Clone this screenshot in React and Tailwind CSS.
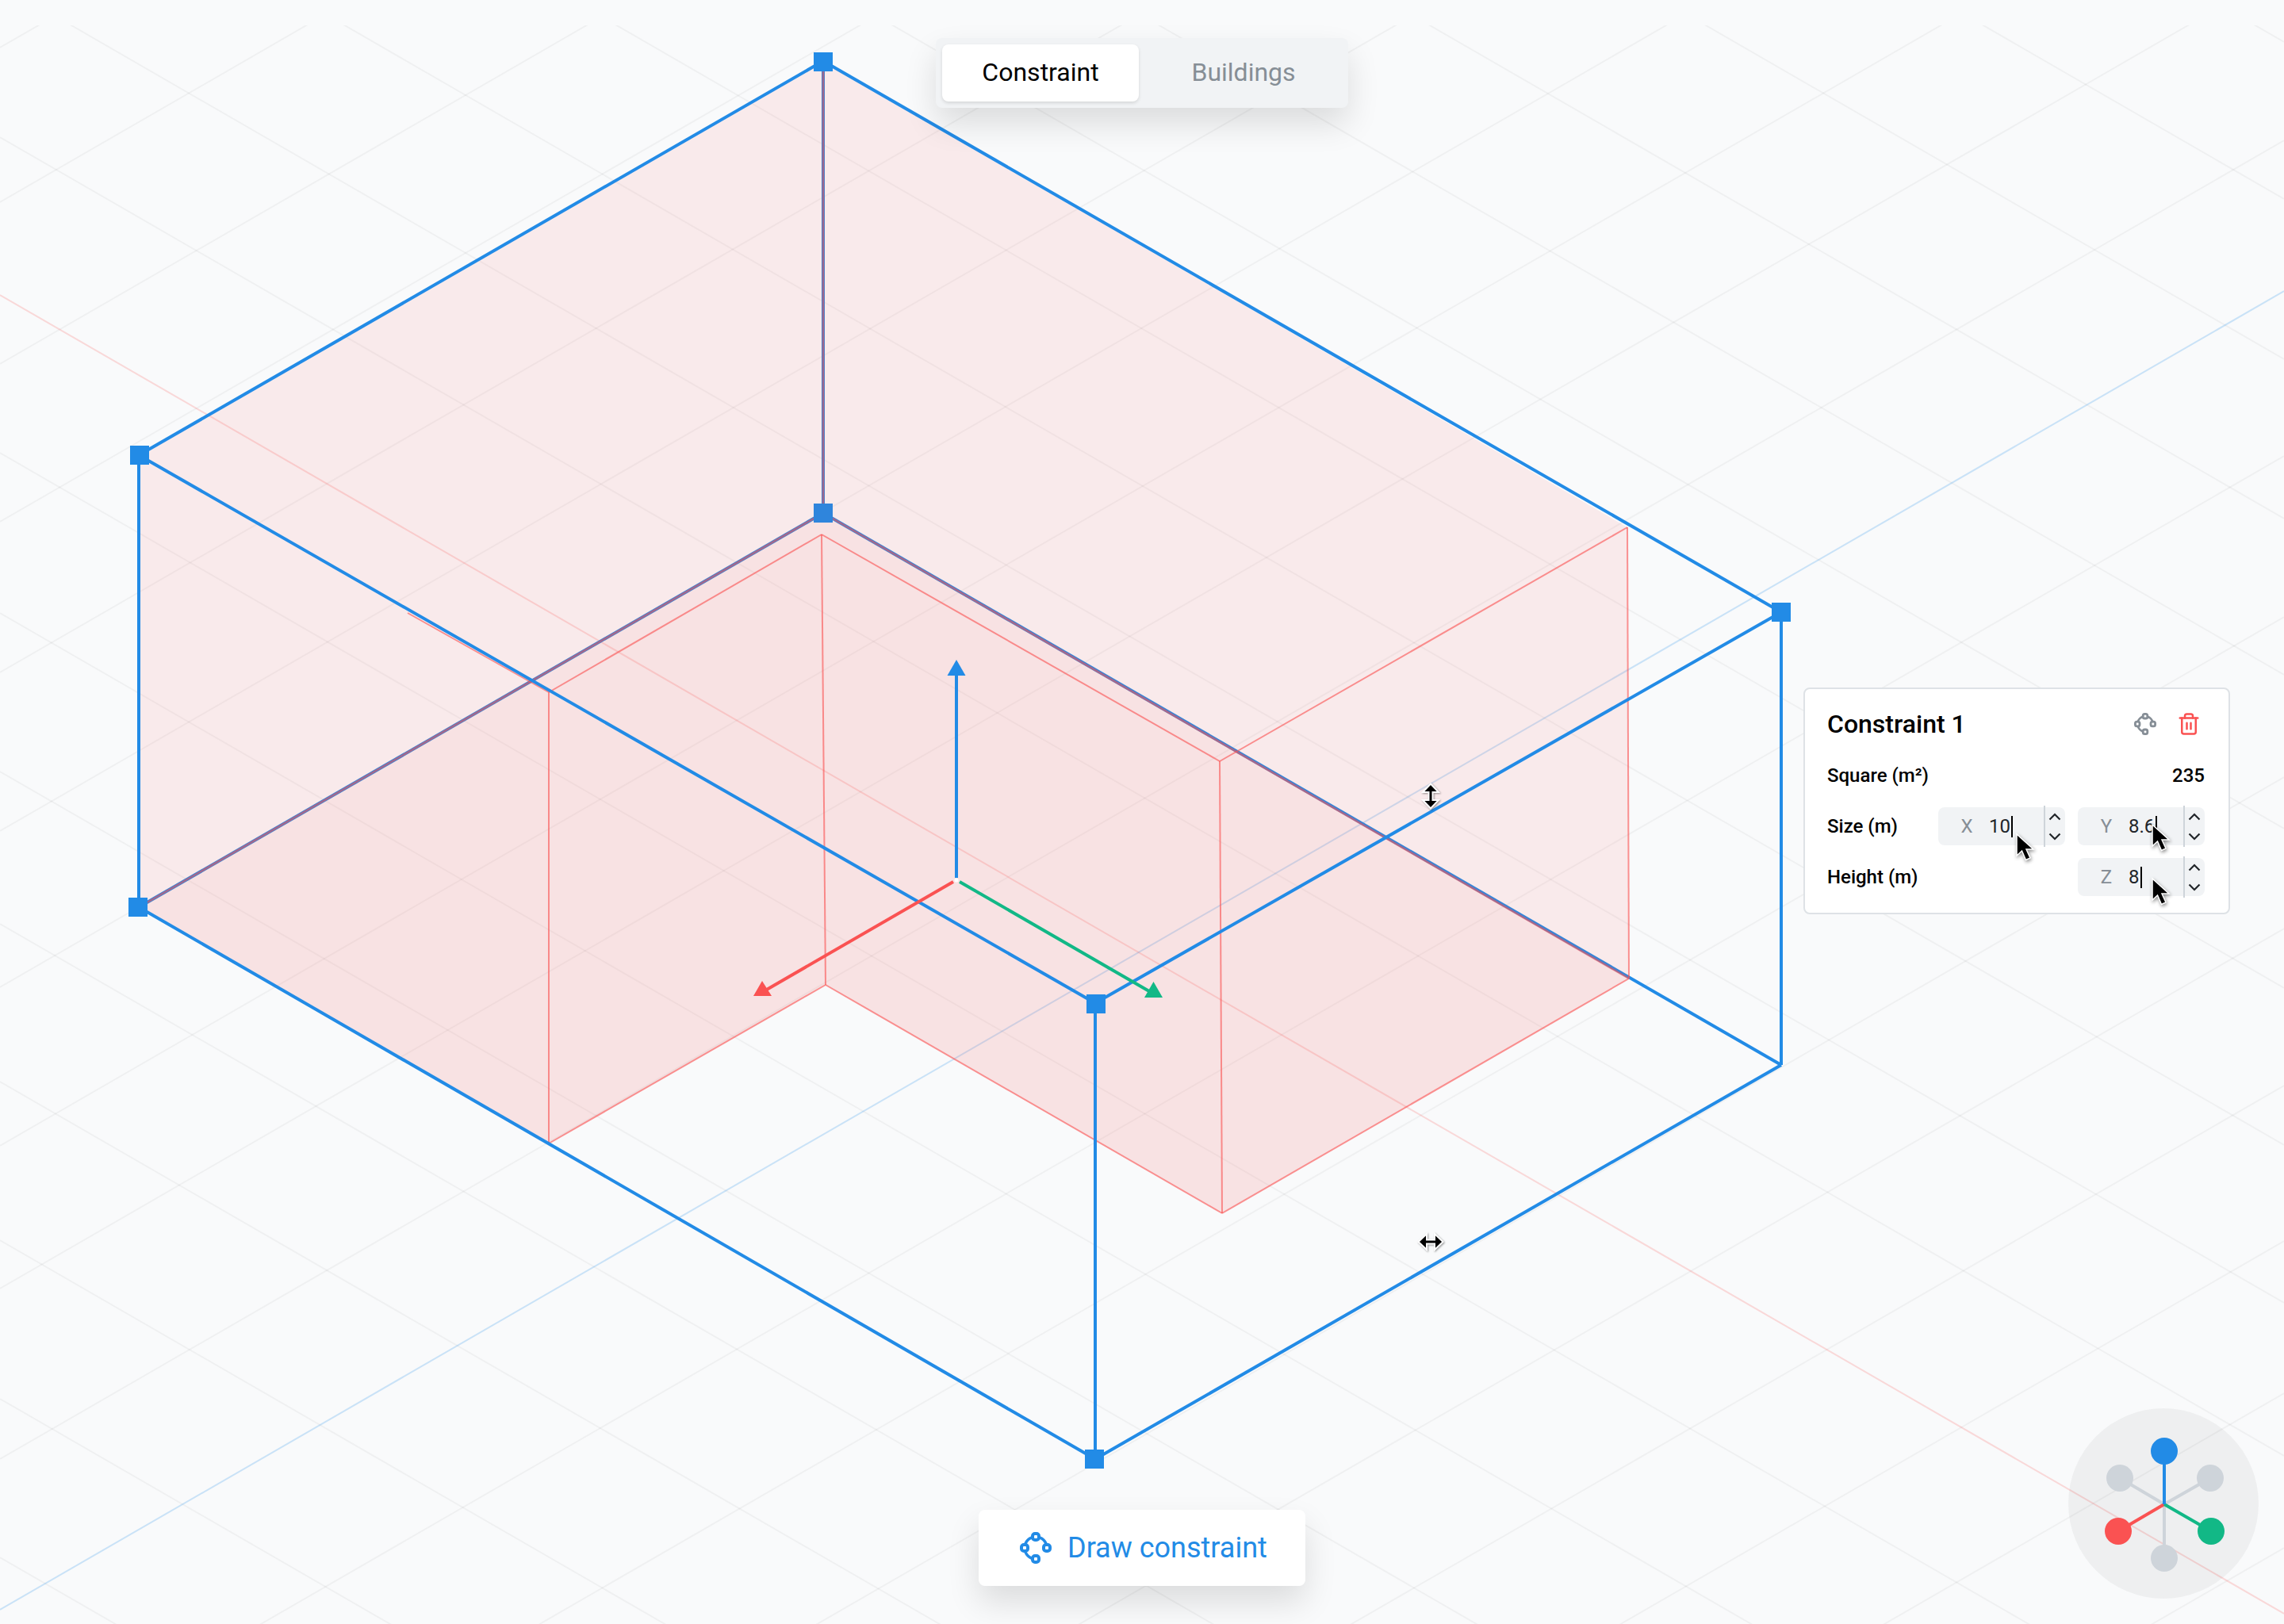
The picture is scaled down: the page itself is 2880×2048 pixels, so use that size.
import React from "react";
import { Trash2 } from "lucide-react";

const BLUE = "#228be6";
const RED = "#fa5252";
const GREEN = "#12b886";
const K = 0.5774;

const C_LINES = [1964, 1764, 1564, 1364, 1165, 973, 773, 571, 173, -20, -219, -417, -618, -812, -1009, -1210, -1412, -1610];
const D_LINES = [60, 255, 459, 658, 848, 1048, 1245, 1445, 1625, 1840, 2238, 2441, 2643, 2834, 3032, 3228, 3420, 3615];

const A = [1038, 77], B = [175, 574], Cc = [1038, 647], D = [175, 1144];
const E = [2246, 772], F = [1381, 1265], G = [2246, 1343], H = [1381, 1840];
const P1 = [692, 873], P2 = [1036, 674], P3 = [1538, 960], P4 = [2052, 665];
const Q1 = [692, 1442], Q2 = [1041, 1242], Q3 = [1541, 1530], Q4 = [2054, 1234];

const pts = (...p) => p.map((v) => v.join(",")).join(" ");

function Seg({ a, b, color, w = 4, op = 1 }) {
  return <line x1={a[0]} y1={a[1]} x2={b[0]} y2={b[1]} stroke={color} strokeWidth={w} strokeOpacity={op} />;
}

function Handle({ at }) {
  return <rect x={at[0] - 12} y={at[1] - 12} width="24" height="24" fill={BLUE} />;
}

function Scene() {
  return (
    <svg className="absolute inset-0" width="2880" height="2048" viewBox="0 0 2880 2048">
      <defs>
        <clipPath id="gridclip">
          <rect x="0" y="32" width="2880" height="2016" />
        </clipPath>
      </defs>
      <g clipPath="url(#gridclip)">
        {C_LINES.map((c) => (
          <line key={"c" + c} x1="0" y1={c} x2="2880" y2={c + K * 2880} stroke="#000" strokeOpacity="0.04" strokeWidth="2" />
        ))}
        {D_LINES.map((d) => (
          <line key={"d" + d} x1="0" y1={d} x2="2880" y2={d - K * 2880} stroke="#000" strokeOpacity="0.04" strokeWidth="2" />
        ))}
      </g>
      <line x1="0" y1="372" x2="2880" y2={372 + K * 2880} stroke={RED} strokeOpacity="0.2" strokeWidth="2" />
      <line x1="0" y1="2030" x2="2880" y2={2030 - K * 2880} stroke={BLUE} strokeOpacity="0.22" strokeWidth="2" />

      <Seg a={A} b={Cc} color={BLUE} />
      <Seg a={D} b={Cc} color={BLUE} />
      <Seg a={Cc} b={G} color={BLUE} />

      <polygon points={pts(B, A, P4, Q4, Cc, D)} fill={RED} fillOpacity="0.09" />
      <polygon points={pts(D, Cc, Q4, Q3, Q2, Q1)} fill={RED} fillOpacity="0.14" />

      <Seg a={A} b={Cc} color={RED} w={2.5} op={0.55} />
      <Seg a={D} b={Cc} color={RED} w={2.5} op={0.55} />
      <Seg a={Cc} b={Q4} color={RED} w={2.5} op={0.55} />
      <rect x="1026" y="635" width="24" height="24" fill="#2f85dc" />

      {[[P1, P2], [P2, Q2], [P1, Q1], [Q1, Q2], [Q2, Q3], [P2, P3], [P3, Q3], [P3, P4], [P4, Q4], [Q3, Q4], [[514, 773], P1]].map(([a, b], i) => (
        <Seg key={i} a={a} b={b} color={RED} w={2} op={0.62} />
      ))}

      {[[A, B], [A, E], [B, D], [B, F], [F, E], [F, H], [D, H], [H, G], [E, G]].map(([a, b], i) => (
        <Seg key={i} a={a} b={b} color={BLUE} />
      ))}
      <Handle at={[1038, 78]} />
      <Handle at={[176, 574]} />
      <Handle at={[174, 1144]} />
      <Handle at={[2246, 772]} />
      <Handle at={[1382, 1266]} />
      <Handle at={[1380, 1840]} />

      <line x1="1206" y1="1107" x2="1206" y2="850" stroke={BLUE} strokeWidth="4" />
      <polygon points="1206,832 1194.5,852 1217.5,852" fill={BLUE} />
      <line x1="1202" y1="1112" x2="965" y2="1249" stroke={RED} strokeWidth="4" />
      <polygon points="961,1237 950,1256 973,1256" fill={RED} />
      <line x1="1210" y1="1112" x2="1449" y2="1250" stroke={GREEN} strokeWidth="4" />
      <polygon points="1454.5,1238 1443,1258 1466,1258" fill={GREEN} />
      <circle cx="1206" cy="1110" r="2.5" fill="#fff" />

      <circle cx="2728" cy="1896" r="120" fill="#000" fillOpacity="0.045" />
      <line x1="2729" y1="1897" x2="2673" y2="1864" stroke="#ced4da" strokeWidth="4" />
      <line x1="2729" y1="1897" x2="2787" y2="1864" stroke="#ced4da" strokeWidth="4" />
      <line x1="2729" y1="1897" x2="2729" y2="1965" stroke="#ced4da" strokeWidth="4" />
      <circle cx="2673" cy="1864" r="17" fill="#ced4da" />
      <circle cx="2787" cy="1864" r="17" fill="#ced4da" />
      <circle cx="2729" cy="1965" r="17" fill="#ced4da" />
      <line x1="2729" y1="1897" x2="2671" y2="1931" stroke={RED} strokeWidth="4" />
      <line x1="2729" y1="1897" x2="2788" y2="1931" stroke={GREEN} strokeWidth="4" />
      <line x1="2729" y1="1897" x2="2729" y2="1830" stroke={BLUE} strokeWidth="4" />
      <circle cx="2729" cy="1830" r="17" fill={BLUE} />
      <circle cx="2671" cy="1931" r="17" fill={RED} />
      <circle cx="2788" cy="1931" r="17" fill={GREEN} />
    </svg>
  );
}

function ConstraintIcon({ size, color, className }) {
  return (
    <svg width={size} height={size} viewBox="0 0 40 40" fill="none" className={className}>
      <path d="M20 6 A14 14 0 0 0 6 20 M20 6 A14 14 0 0 1 34 20 M6 20 A14 14 0 0 0 20 34" stroke={color} strokeWidth="3.5" />
      <rect x="16" y="2" width="8" height="8" rx="3" fill="#fff" stroke={color} strokeWidth="4" />
      <rect x="30" y="16" width="8" height="8" rx="3" fill="#fff" stroke={color} strokeWidth="4" />
      <rect x="16" y="30" width="8" height="8" rx="3" fill="#fff" stroke={color} strokeWidth="4" />
      <rect x="2" y="16" width="8" height="8" rx="3" fill="#fff" stroke={color} strokeWidth="4" />
    </svg>
  );
}

function Chevron({ up }) {
  return (
    <svg width="16" height="10" viewBox="0 0 16 10" fill="none">
      <path d={up ? "M1.5 8.5 L8 2 L14.5 8.5" : "M1.5 1.5 L8 8 L14.5 1.5"} stroke="#212529" strokeWidth="2.2" />
    </svg>
  );
}

function NumberField({ label, value }) {
  return (
    <div className="flex h-12 w-[160px] items-center rounded-lg bg-[#f1f3f5]">
      <span className="w-[64px] pl-2 text-center text-[24px] leading-none text-[#868e96]">{label}</span>
      <span className="text-[24px] leading-none text-[#212529]">{value}</span>
      <span className="ml-px h-[27px] w-[2px] bg-black" />
      <div className="ml-auto flex h-[52px] w-[27px] flex-col items-center justify-center gap-[15px] border-l-2 border-[#ced4da] pr-[2px]">
        <Chevron up />
        <Chevron />
      </div>
    </div>
  );
}

function Arrow({ x, y }) {
  return (
    <svg
      className="absolute drop-shadow-[1px_2px_2px_rgba(0,0,0,0.45)]"
      style={{ left: x - 2, top: y - 2 }}
      width="28"
      height="40"
      viewBox="0 0 28 40"
    >
      <path d="M2 2 L2 29 L8.5 23 L13.5 34.5 L19 32 L14 21 L23 21 Z" fill="#000" stroke="#fff" strokeWidth="1.5" />
    </svg>
  );
}

function ResizeV() {
  return (
    <svg className="absolute left-[1792px] top-[987px] drop-shadow-[1px_1px_1px_rgba(0,0,0,0.4)]" width="24" height="34" viewBox="0 0 24 34">
      <path d="M12 1.5 L22 12 H14.5 V22 H22 L12 32.5 L2 22 H9.5 V12 H2 Z" fill="#000" stroke="#fff" strokeWidth="2" />
    </svg>
  );
}

function ResizeH() {
  return (
    <svg className="absolute left-[1787px] top-[1554px] drop-shadow-[1px_1px_1px_rgba(0,0,0,0.4)]" width="34" height="24" viewBox="0 0 34 24">
      <path d="M1.5 12 L12 2 V9.5 H22 V2 L32.5 12 L22 22 V14.5 H12 V22 Z" fill="#000" stroke="#fff" strokeWidth="2" />
    </svg>
  );
}

export default function App() {
  return (
    <div className="relative h-[2048px] w-[2880px] overflow-hidden bg-[#f9fafb] [font-family:Roboto,sans-serif]">
      <Scene />

      <div className="absolute left-1/2 top-[48px] grid h-[88px] w-[520px] -translate-x-1/2 grid-cols-2 gap-2 rounded-lg bg-[#f1f3f5] p-2 shadow-[0_20px_40px_rgba(0,0,0,0.12)]">
        <div className="flex items-center justify-center rounded-lg bg-white pb-[2px] text-[32px] text-black shadow-[0_2px_4px_rgba(0,0,0,0.12)]">Constraint</div>
        <div className="flex items-center justify-center pb-[2px] text-[32px] text-[#868e96]">Buildings</div>
      </div>

      <div className="absolute left-[2274px] top-[867px] h-[286px] w-[538px] rounded-lg border-2 border-[#dee2e6] bg-white pl-[28px] pr-[30px] pt-[24px]">
        <div className="flex h-10 items-center justify-between">
          <span className="text-[32px] font-medium leading-10 text-black">Constraint 1</span>
          <div className="flex items-center gap-[26px] pr-[5px]">
            <ConstraintIcon size={28} color="#868e96" />
            <Trash2 size={30} color={RED} strokeWidth={2} />
          </div>
        </div>
        <div className="mt-[21px] flex flex-col gap-4 text-[24px] font-medium text-black">
          <div className="flex h-12 items-center justify-between">
            <span>Square (m²)</span>
            <span>235</span>
          </div>
          <div className="flex h-12 items-center justify-between font-normal">
            <span className="font-medium">Size (m)</span>
            <div className="flex gap-4">
              <NumberField label="X" value="10" />
              <NumberField label="Y" value="8.6" />
            </div>
          </div>
          <div className="flex h-12 items-center justify-between font-normal">
            <span className="font-medium">Height (m)</span>
            <NumberField label="Z" value="8" />
          </div>
        </div>
      </div>

      <Arrow x={2543} y={1052} />
      <Arrow x={2714} y={1040} />
      <Arrow x={2714} y={1108} />
      <ResizeV />
      <ResizeH />

      <div className="absolute bottom-[48px] left-1/2 flex h-[96px] w-[412px] -translate-x-1/2 items-center gap-[20px] rounded-lg bg-white pl-[52px] text-[36px] text-[#228be6] shadow-[0_20px_40px_rgba(0,0,0,0.12)]">
        <ConstraintIcon size={40} color="#228be6" />
        <span>Draw constraint</span>
      </div>
    </div>
  );
}
